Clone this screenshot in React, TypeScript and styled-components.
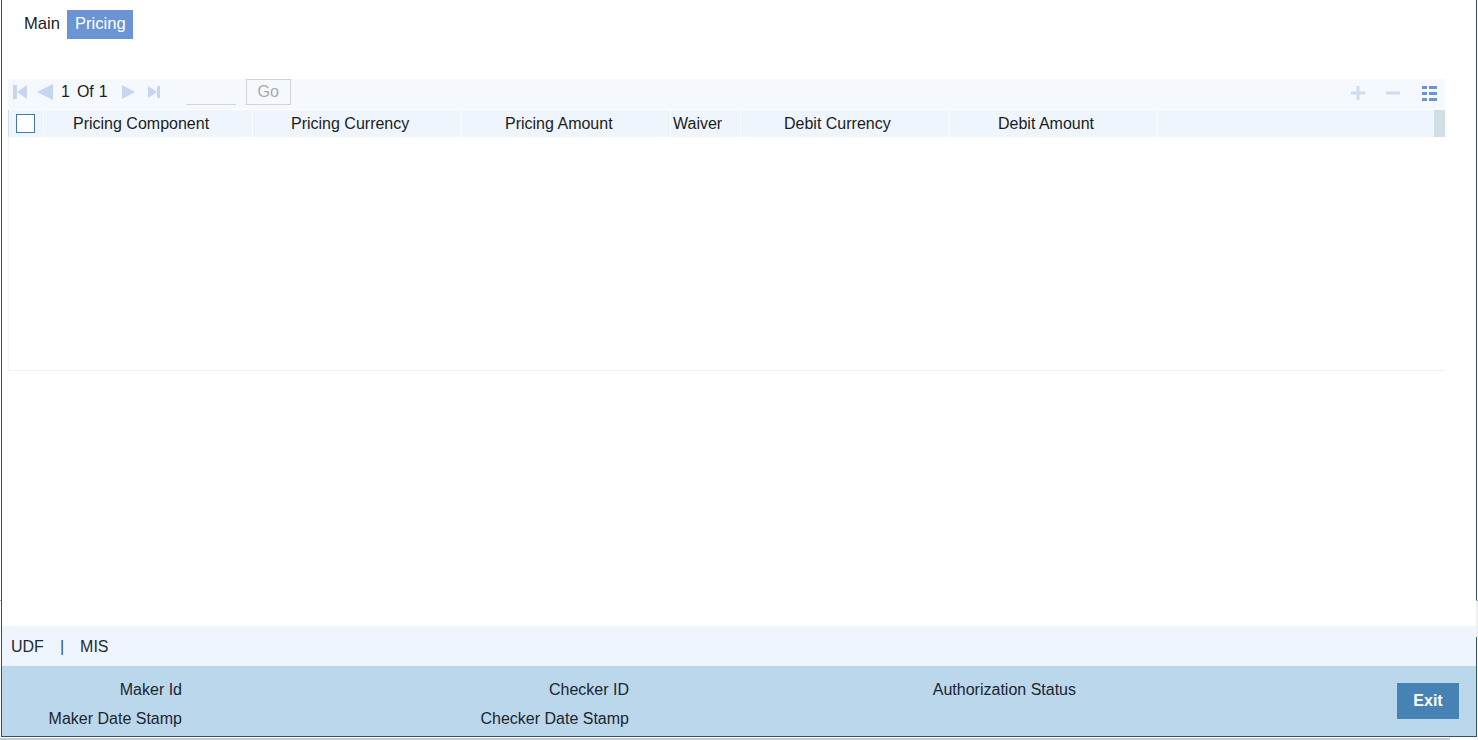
import React from "react";
import styled, { createGlobalStyle } from "styled-components";

const Global = createGlobalStyle`
  html, body { margin: 0; padding: 0; background: #fff; overflow: hidden; }
  body { font-family: "Liberation Sans", Arial, sans-serif; font-size: 16px; color: #1c1c1c; }
`;

const Page = styled.div`
  position: relative;
  width: 1478px;
  height: 740px;
  display: flex;
  flex-direction: column;
`;

const Frame = styled.div`
  box-sizing: border-box;
  margin-left: 1px;
  width: 1476px;
  height: 737px;
  border-left: 1px solid #2f4f73;
  border-right: 1px solid #2f4f73;
  border-bottom: 1px solid #2f4f73;
  display: flex;
  flex-direction: column;
`;

const BackWindowEdge = styled.div`
  position: absolute;
  top: 600px;
  right: 0;
  width: 2px;
  height: 36px;
  background: #eef0f2;
  border-top: 1px solid #9fb0c0;
`;

const BackWindowTick = styled.div`
  position: absolute;
  top: 600px;
  left: 0;
  width: 1px;
  height: 1px;
  background: #9fb0c0;
`;

const BottomRule = styled.div`
  margin-top: 1px;
  width: 1450px;
  height: 2px;
  background: #c8c8c8;
`;

const Tabs = styled.div`
  display: flex;
  align-items: stretch;
  height: 29px;
  margin: 10px 0 0 15px;
  font-size: 16.6px;
`;

const Tab = styled.div<{ $active?: boolean }>`
  padding: 0 7px 0 ${(p) => (p.$active ? 8 : 7)}px;
  line-height: 27px;
  background: ${(p) => (p.$active ? "#6a94d4" : "transparent")};
  color: ${(p) => (p.$active ? "#fff" : "#1c1c1c")};
`;

const Grid = styled.div`
  margin: 40px 0 0 6px;
  width: 1437px;
  flex: 0 0 auto;
`;

const Toolbar = styled.div`
  box-sizing: border-box;
  height: 30px;
  background: #f5f9fe;
  display: flex;
  align-items: center;
  padding: 0 0 5px 5px;
`;

const PagerIcon = styled.svg<{ $gap?: number }>`
  display: block;
  flex: none;
  margin-right: ${(p) => p.$gap ?? 0}px;
  fill: #c5d6ee;
`;

const PageText = styled.span<{ $gap: number }>`
  margin-right: ${(p) => p.$gap}px;
  line-height: 26px;
`;

const PageInput = styled.div`
  width: 50px;
  height: 25px;
  margin: 1px 10px 0 0;
  border-bottom: 1px solid #d5d5d5;
`;

const GoButton = styled.div`
  box-sizing: border-box;
  width: 45px;
  height: 26px;
  margin-top: 1px;
  border: 1px solid #d3d3d3;
  color: #a9a9a9;
  text-align: center;
  line-height: 24px;
`;

const ToolActions = styled.div`
  margin-left: auto;
  display: flex;
  align-items: center;
  gap: 21px;
  padding: 3px 8px 0 0;
`;

const PlusMinus = styled.svg`
  display: block;
  fill: #cfdcee;
`;

const ListIcon = styled.svg`
  display: block;
  margin-left: 1px;
  fill: #6a94d4;
`;

const HeaderRow = styled.div`
  margin-top: 1px;
  height: 27px;
  display: flex;
  background: #eef5fc;
  border-left: 1px solid #d8dde2;
  box-sizing: border-box;
  position: relative;
`;

const CheckCell = styled.div`
  width: 35px;
  flex: none;
  display: flex;
  align-items: center;
  padding-left: 7px;
  box-sizing: border-box;
  border-right: 1px solid #fbfdff;
`;

const Check = styled.div`
  box-sizing: border-box;
  width: 19px;
  height: 19px;
  background: #fff;
  border: 1px solid #3f7ba8;
`;

const HeadCell = styled.div<{ $w: number; $pad: number }>`
  box-sizing: border-box;
  width: ${(p) => p.$w}px;
  flex: none;
  padding-left: ${(p) => p.$pad}px;
  line-height: 28px;
  white-space: nowrap;
  border-right: 1px solid #fbfdff;
`;

const ScrollStub = styled.div`
  position: absolute;
  top: 0;
  right: 0;
  bottom: 0;
  width: 11px;
  background: #cfdfe4;
`;

const Body = styled.div`
  height: 234px;
  box-sizing: border-box;
  border-left: 1px solid #f3f3f3;
  border-bottom: 1px solid #f0f0f0;
`;

const Spacer = styled.div`
  flex: 1;
`;

const LinkBar = styled.div`
  box-sizing: border-box;
  height: 40px;
  background: #eef5fc;
  display: flex;
  align-items: center;
  padding: 2px 0 0 9px;
  gap: 13px;
  color: #1c2a3a;
`;

const LinkSep = styled.span`
  color: #33566b;
  padding: 0 3px;
`;

const Footer = styled.div`
  height: 70px;
  background: #bbd7ec;
  display: flex;
  align-items: flex-start;
  position: relative;
`;

const AuditCol = styled.div<{ $w: number }>`
  box-sizing: border-box;
  width: ${(p) => p.$w}px;
  flex: none;
  padding-top: 15px;
  display: flex;
  flex-direction: column;
  align-items: flex-end;
  gap: 11px;
`;

const AuditLabel = styled.div`
  line-height: 18px;
  white-space: nowrap;
  color: #1c2530;
`;

const ExitButton = styled.div`
  position: absolute;
  left: 1395px;
  top: 17px;
  width: 62px;
  height: 36px;
  background: #4682b4;
  color: #fff;
  font-weight: bold;
  text-align: center;
  line-height: 35px;
`;

const heads = [
  { t: "Pricing Component", w: 209, pad: 29 },
  { t: "Pricing Currency", w: 209, pad: 38 },
  { t: "Pricing Amount", w: 209, pad: 43 },
  { t: "Waiver", w: 70, pad: 2 },
  { t: "Debit Currency", w: 209, pad: 43 },
  { t: "Debit Amount", w: 208, pad: 48 },
];

export default function App() {
  return (
    <Page>
      <Global />
      <Frame>
        <Tabs>
          <Tab>Main</Tab>
          <Tab $active>Pricing</Tab>
        </Tabs>
        <Grid>
          <Toolbar>
            <PagerIcon width="14" height="16" viewBox="0 0 14 16" $gap={10}>
              <rect x="0" y="1" width="4" height="14" />
              <path d="M14 1v14L4 8z" />
            </PagerIcon>
            <PagerIcon width="16" height="16" viewBox="0 0 16 16" $gap={8}>
              <path d="M16 0v16L0 8z" />
            </PagerIcon>
            <PageText $gap={7}>1</PageText>
            <PageText $gap={5}>Of</PageText>
            <PageText $gap={14}>1</PageText>
            <PagerIcon width="13" height="14" viewBox="0 0 13 14" $gap={13}>
              <path d="M0 0v14l13-7z" />
            </PagerIcon>
            <PagerIcon width="12" height="14" viewBox="0 0 12 14" $gap={26}>
              <path d="M0 1v12l9-6z" />
              <rect x="9" y="1" width="3" height="12" />
            </PagerIcon>
            <PageInput />
            <GoButton>Go</GoButton>
            <ToolActions>
              <PlusMinus width="14" height="14" viewBox="0 0 14 14">
                <rect x="5.5" y="0" width="3" height="14" />
                <rect x="0" y="5.5" width="14" height="3" />
              </PlusMinus>
              <PlusMinus width="14" height="14" viewBox="0 0 14 14">
                <rect x="0" y="5.5" width="14" height="3" />
              </PlusMinus>
              <ListIcon width="15" height="15" viewBox="0 0 15 15">
                <rect x="0" y="0" width="5" height="3" />
                <rect x="7" y="0" width="8" height="3" />
                <rect x="0" y="6" width="5" height="3" />
                <rect x="7" y="6" width="8" height="3" />
                <rect x="0" y="12" width="5" height="3" />
                <rect x="7" y="12" width="8" height="3" />
              </ListIcon>
            </ToolActions>
          </Toolbar>
          <HeaderRow>
            <CheckCell>
              <Check />
            </CheckCell>
            {heads.map((h) => (
              <HeadCell key={h.t} $w={h.w} $pad={h.pad}>
                {h.t}
              </HeadCell>
            ))}
            <ScrollStub />
          </HeaderRow>
          <Body />
        </Grid>
        <Spacer />
        <LinkBar>
          <span>UDF</span>
          <LinkSep>|</LinkSep>
          <span>MIS</span>
        </LinkBar>
        <Footer>
          <AuditCol $w={180}>
            <AuditLabel>Maker Id</AuditLabel>
            <AuditLabel>Maker Date Stamp</AuditLabel>
          </AuditCol>
          <AuditCol $w={447}>
            <AuditLabel>Checker ID</AuditLabel>
            <AuditLabel>Checker Date Stamp</AuditLabel>
          </AuditCol>
          <AuditCol $w={447}>
            <AuditLabel>Authorization Status</AuditLabel>
          </AuditCol>
          <ExitButton>Exit</ExitButton>
        </Footer>
      </Frame>
      <BottomRule />
      <BackWindowEdge />
      <BackWindowTick />
    </Page>
  );
}
